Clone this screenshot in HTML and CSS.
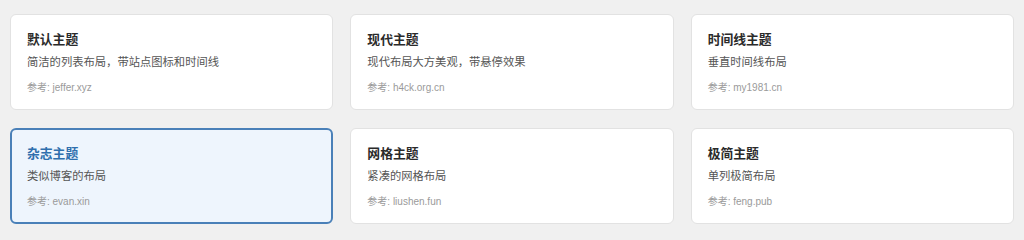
FILE: index.html
```html
<!DOCTYPE html>
<html lang="zh-CN">
<head>
<meta charset="utf-8">
<title>主题选择</title>
<link rel="stylesheet" href="styles.css">
</head>
<body>
<div class="grid">
  <div class="card">
    <div class="title">默认主题</div>
    <div class="desc">简洁的列表布局，带站点图标和时间线</div>
    <div class="ref">参考: jeffer.xyz</div>
  </div>
  <div class="card">
    <div class="title">现代主题</div>
    <div class="desc">现代布局大方美观，带悬停效果</div>
    <div class="ref">参考: h4ck.org.cn</div>
  </div>
  <div class="card">
    <div class="title">时间线主题</div>
    <div class="desc">垂直时间线布局</div>
    <div class="ref">参考: my1981.cn</div>
  </div>
  <div class="card active">
    <div class="title">杂志主题</div>
    <div class="desc">类似博客的布局</div>
    <div class="ref">参考: evan.xin</div>
  </div>
  <div class="card">
    <div class="title">网格主题</div>
    <div class="desc">紧凑的网格布局</div>
    <div class="ref">参考: liushen.fun</div>
  </div>
  <div class="card">
    <div class="title">极简主题</div>
    <div class="desc">单列极简布局</div>
    <div class="ref">参考: feng.pub</div>
  </div>
</div>
</body>
</html>
```

FILE: styles.css
```css
html, body {
  margin: 0;
  padding: 0;
  background: #f0f0f0;
}
body {
  font-family: "Liberation Sans", "Noto Sans CJK SC", sans-serif;
  width: 1024px;
  height: 234px;
  overflow: hidden;
}
.grid {
  display: grid;
  grid-template-columns: repeat(3, 1fr);
  column-gap: 17px;
  row-gap: 18px;
  padding: 14px 10px 0 10px;
}
.card {
  background: #ffffff;
  border: 1px solid #e2e2e2;
  border-radius: 6px;
  padding: 16px 16px 14px 16px;
  display: flex;
  flex-direction: column;
}
.card.active {
  background: #eef5fd;
  border: 2px solid #4a80b8;
  padding: 15px 15px 13px 15px;
}
.title {
  font-size: 12.8px;
  line-height: 17px;
  font-weight: 700;
  color: #2a2a2a;
  margin-bottom: 6px;
}
.card.active .title {
  color: #2f6fad;
}
.desc {
  font-size: 11.3px;
  line-height: 16px;
  color: #555555;
  margin-bottom: 11px;
}
.ref {
  font-size: 10px;
  line-height: 14px;
  color: #9a9a9a;
}
```
